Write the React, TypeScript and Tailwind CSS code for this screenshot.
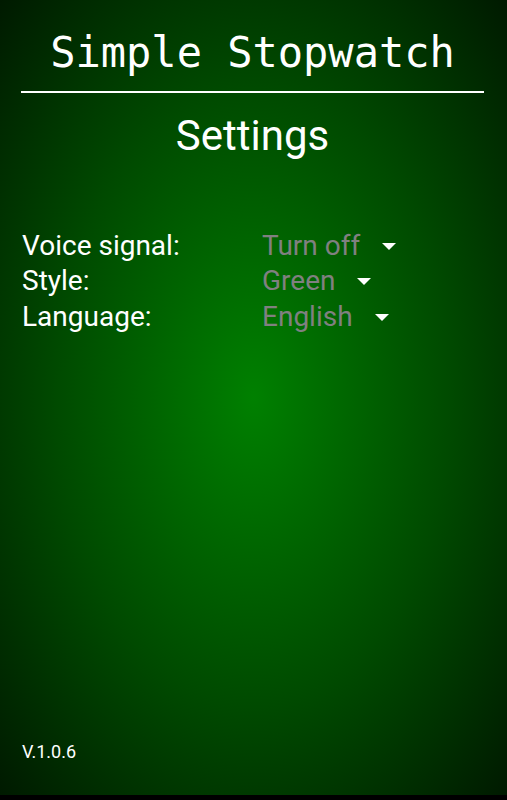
const rows = [
  { label: "Voice signal:", value: "Turn off" },
  { label: "Style:", value: "Green" },
  { label: "Language:", value: "English" },
];

function Caret() {
  return (
    <svg width="14" height="8" viewBox="0 0 14 8" className="ml-[22px] mt-[2px]">
      <path d="M0 0H14L7 7Z" fill="#ffffff" />
    </svg>
  );
}

export default function App() {
  return (
    <div className="flex h-[800px] w-[507px] flex-col bg-black font-['Roboto',sans-serif] text-white">
      <div className="flex h-[795px] flex-col bg-[radial-gradient(ellipse_at_50%_50%,#008000_0%,#004a00_55%,#001a00_100%)] pl-[21px] pr-[23px]">
        <h1 className="pt-[24px] text-center font-['DejaVu_Sans_Mono',monospace] text-[42px] leading-[57px]">
          Simple Stopwatch
        </h1>
        <div className="mt-[10px] h-[2px] bg-white" />
        <h2 className="mt-[19px] text-center text-[42px] leading-[48px]">Settings</h2>

        <div className="mt-[68px] flex flex-col">
          {rows.map((r) => (
            <div key={r.label} className="flex h-[35.5px] items-center text-[28px]">
              <span className="w-[241px] pl-[1px]">{r.label}</span>
              <span className="text-[#808080]">{r.value}</span>
              <Caret />
            </div>
          ))}
        </div>

        <div className="mt-auto pb-[30px] pl-[1px] text-[18px]">V.1.0.6</div>
      </div>
    </div>
  );
}
